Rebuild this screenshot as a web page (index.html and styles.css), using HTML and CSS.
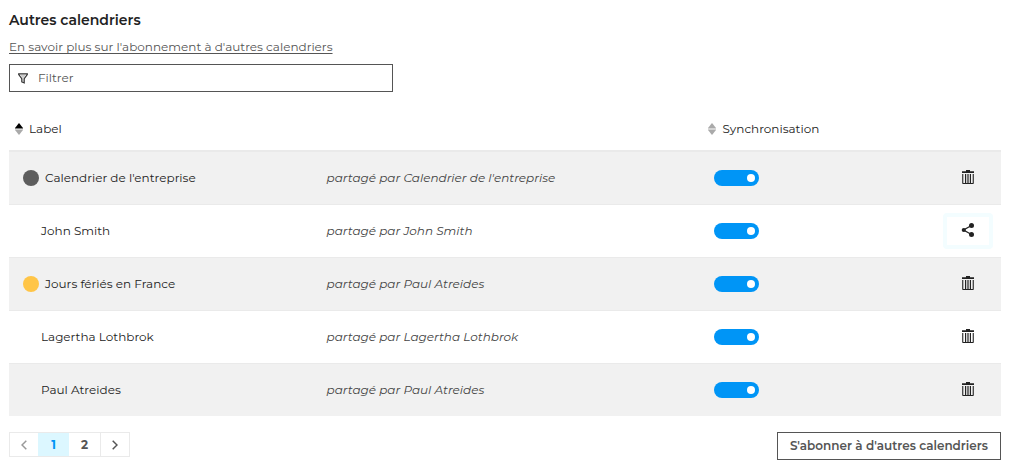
FILE: index.html
```html
<!DOCTYPE html>
<html lang="fr">
<head>
<meta charset="utf-8">
<meta name="viewport" content="width=device-width, initial-scale=1">
<title>Autres calendriers</title>
<link rel="stylesheet" href="styles.css">
</head>
<body>
<svg class="sprite" aria-hidden="true">
  <symbol id="trash" viewBox="0 0 14 16"><path d="M5 1h4v1.200h4V4H1V2.200h4zM1.200 5h1.100v9h9.400V5h1.100v9.200a.8.8 0 0 1-.8.8H2a.8.8 0 0 1-.8-.8zM4 5h1.200v9H4zM6.400 5h1.200v9H6.400zM8.800 5H10v9H8.800z"/></symbol>
  <symbol id="share" viewBox="0 0 14 16"><path d="M10.500 3.500 2.500 8l8 4.500" fill="none" stroke="currentColor" stroke-width="1.300"/><circle cx="10.500" cy="3.400" r="2.500"/><circle cx="2.800" cy="8" r="2.100"/><circle cx="10.500" cy="12.600" r="2.500"/></symbol>
  <symbol id="sort" viewBox="0 0 8 12"><path d="M4 0 8 5v.500H0V5z" fill="currentColor"/><path d="M0 6.500h8V7l-4 5-4-5z" fill="#aaa"/></symbol>
</svg>
<main class="page">
  <h1 class="title">Autres calendriers</h1>
  <a class="help" href="#">En savoir plus sur l'abonnement à d'autres calendriers</a>
  <label class="filter">
    <svg class="filter-icon" viewBox="0 0 10 11" aria-hidden="true"><path d="M.7.900h8.600v.700L6.200 5.600v4.200l-2.400-1V5.600L.7 1.600z" fill="none" stroke="currentColor" stroke-width="1.200"/><path d="M2 2h6L5 5.500z" fill="#ccc"/><path d="M4.300 5.500h1.400v3.500l-1.400-.6z" fill="#999"/></svg>
    <input class="filter-input" type="text" placeholder="Filtrer" aria-label="Filtrer">
  </label>
  <table class="calendars">
    <colgroup><col class="col-label"><col class="col-owner"><col class="col-sync"><col class="col-action"></colgroup>
    <thead>
      <tr>
        <th><button class="sort ascending"><svg class="sort-icon" aria-hidden="true"><use href="#sort"/></svg>Label</button></th>
        <td></td>
        <th><button class="sort"><svg class="sort-icon" aria-hidden="true"><use href="#sort"/></svg>Synchronisation</button></th>
        <td></td>
      </tr>
    </thead>
    <tbody>
      <tr>
        <td><span class="name"><i class="dot gray"></i>Calendrier de l'entreprise</span></td>
        <td class="owner">partagé par Calendrier de l'entreprise</td>
        <td class="sync"><input class="toggle" type="checkbox" role="switch" aria-label="Synchroniser Calendrier de l'entreprise" checked></td>
        <td><button class="action" aria-label="Supprimer"><svg class="icon"><use href="#trash"/></svg></button></td>
      </tr>
      <tr>
        <td><span class="name plain">John Smith</span></td>
        <td class="owner">partagé par John Smith</td>
        <td class="sync"><input class="toggle" type="checkbox" role="switch" aria-label="Synchroniser John Smith" checked></td>
        <td><button class="action focused" aria-label="Partager"><svg class="icon"><use href="#share"/></svg></button></td>
      </tr>
      <tr>
        <td><span class="name"><i class="dot yellow"></i>Jours fériés en France</span></td>
        <td class="owner">partagé par Paul Atreides</td>
        <td class="sync"><input class="toggle" type="checkbox" role="switch" aria-label="Synchroniser Jours fériés en France" checked></td>
        <td><button class="action" aria-label="Supprimer"><svg class="icon"><use href="#trash"/></svg></button></td>
      </tr>
      <tr>
        <td><span class="name plain">Lagertha Lothbrok</span></td>
        <td class="owner">partagé par Lagertha Lothbrok</td>
        <td class="sync"><input class="toggle" type="checkbox" role="switch" aria-label="Synchroniser Lagertha Lothbrok" checked></td>
        <td><button class="action" aria-label="Supprimer"><svg class="icon"><use href="#trash"/></svg></button></td>
      </tr>
      <tr>
        <td><span class="name plain">Paul Atreides</span></td>
        <td class="owner">partagé par Paul Atreides</td>
        <td class="sync"><input class="toggle" type="checkbox" role="switch" aria-label="Synchroniser Paul Atreides" checked></td>
        <td><button class="action" aria-label="Supprimer"><svg class="icon"><use href="#trash"/></svg></button></td>
      </tr>
    </tbody>
  </table>
  <footer class="footer">
    <nav class="pager" aria-label="Pagination">
      <button class="page-button muted" aria-label="Page précédente"><svg class="chevron" viewBox="0 0 6 10"><path d="M5.300.700 1 5l4.300 4.300"/></svg></button>
      <button class="page-button current" aria-current="page">1</button>
      <button class="page-button">2</button>
      <button class="page-button next" aria-label="Page suivante"><svg class="chevron" viewBox="0 0 6 10"><path d="M.7.700 5 5 .7 9.300"/></svg></button>
    </nav>
    <button class="subscribe">S'abonner à d'autres calendriers</button>
  </footer>
</main>
</body>
</html>
```

FILE: styles.css
```css
* { box-sizing: border-box; }
body {
  margin: 0;
  background: #fff;
  color: #222;
  font: 12px/20px Montserrat, Inter, sans-serif;
}
button, input { font: inherit; color: inherit; }
button { background: none; border: 0; padding: 0; cursor: pointer; }
.sprite { display: none; }
.page {
  display: flex;
  flex-direction: column;
  align-items: flex-start;
  padding: 10px 8px 6px 9px;
}
.title { margin: 0; font-size: 14px; line-height: 20px; font-weight: 600; }
.help { margin-top: 7px; color: #555; text-decoration: underline; text-underline-offset: 2px; }
.filter {
  display: flex;
  align-items: center;
  gap: 10px;
  width: 100%;
  max-width: 384px;
  height: 28px;
  margin-top: 7px;
  padding: 0 8px;
  border: 1px solid #555;
}
.filter-icon { width: 10px; height: 11px; flex: none; color: #333; }
.filter-input { flex: 1; min-width: 0; border: 0; padding: 0; background: none; outline: 0; }
.filter-input::placeholder { color: #555; opacity: 1; }

.calendars { width: 100%; margin-top: 16px; border-collapse: separate; border-spacing: 0; table-layout: fixed; }
.col-label { width: 31%; }
.col-owner { width: 39%; }
.col-sync { width: 23%; }
.col-action { width: 7%; }
.calendars th, .calendars td { padding: 0; text-align: left; font-weight: 400; }
.calendars thead th, .calendars thead td { height: 43px; border-bottom: 1px solid #eaeaea; }
.calendars tbody td { height: 53px; border-top: 1px solid #eaeaea; }
.calendars tbody tr:nth-child(odd) { background: #f1f1f1; }
.sort { display: flex; align-items: center; gap: 6px; padding-left: 6px; color: #222; }
.calendars th + td + th .sort { padding-left: 5px; }
.sort-icon { width: 8px; height: 12px; color: #aaa; }
.ascending .sort-icon { color: #000; }
.name { display: flex; align-items: center; gap: 6px; padding-left: 14px; }
.plain { padding-left: 32px; }
.dot { width: 16px; height: 16px; border-radius: 50%; }
.gray { background: #5d5d5d; }
.yellow { background: #ffc547; }
.calendars .owner { padding-left: 10px; color: #444; font-style: italic; }
.calendars .sync { padding-left: 11px; }
.toggle {
  display: flex;
  align-items: center;
  justify-content: flex-end;
  appearance: none;
  width: 45px;
  height: 16px;
  margin: 0;
  padding-right: 4px;
  border-radius: 8px;
  background: #0095f6;
}
.toggle::before { content: ""; width: 8px; height: 8px; border-radius: 50%; background: #fff; }
.toggle:not(:checked) { background: #aaa; }
.action {
  display: flex;
  align-items: center;
  justify-content: center;
  width: 50px;
  height: 36px;
  margin: 0 8px 0 auto;
}
.focused { border: 4px solid #f3fdff; border-radius: 4px; }
.icon { width: 14px; height: 16px; fill: currentColor; margin-bottom: 2px; }

.footer { display: flex; justify-content: space-between; width: 100%; margin-top: 16px; }
.pager { display: flex; height: 25px; border: 1px solid #eaeaea; }
.page-button {
  display: flex;
  align-items: center;
  justify-content: center;
  width: 31px;
  color: #555;
  font-weight: 700;
}
.muted { width: 28px; color: #999; }
.next { width: 29px; border-left: 1px solid #eaeaea; }
.current { background: #dcf7ff; color: #0095f6; }
.chevron { width: 6px; height: 10px; fill: none; stroke: currentColor; stroke-width: 1.5; }
.subscribe { height: 28px; padding: 0 12px; border: 1px solid #555; color: #555; font-weight: 600; }
```
